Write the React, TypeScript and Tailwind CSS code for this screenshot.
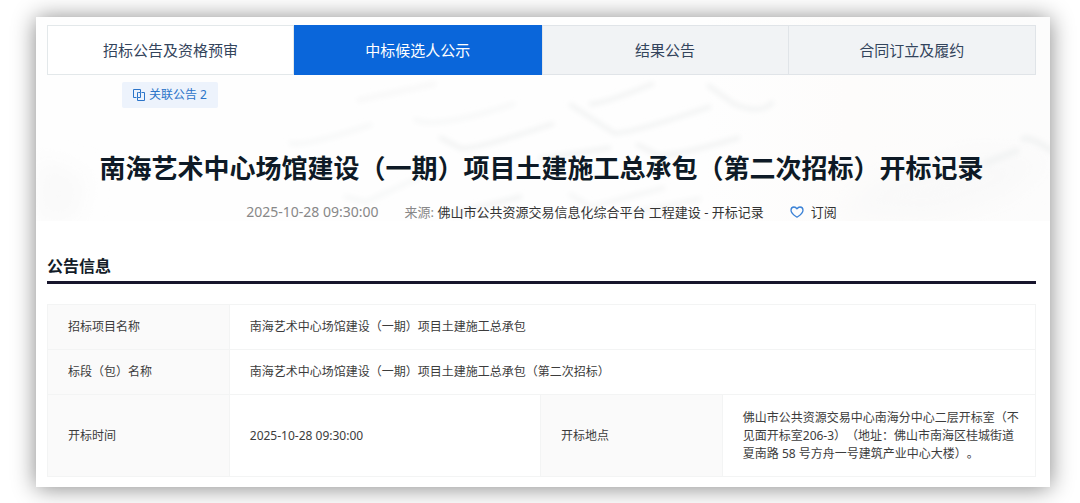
import React from "react";

type Tab = { label: string; active?: boolean; visited?: boolean };

const tabs: Tab[] = [
  { label: "招标公告及资格预审", visited: true },
  { label: "中标候选人公示", active: true },
  { label: "结果公告" },
  { label: "合同订立及履约" },
];

function tabClass(tab: Tab) {
  if (tab.active) return "border-[#0a66da] bg-[#0a66da] text-white";
  if (tab.visited) return "border-[#e3e8ea] bg-white/60 text-[#33445c]";
  return "border-[#e0e4e8] bg-[#f1f3f5] text-[#33445c]";
}

function HeroBackdrop() {
  return (
    <svg
      aria-hidden="true"
      className="absolute inset-x-0 top-0 h-[204px] w-full"
      viewBox="0 0 1014 204"
      preserveAspectRatio="xMidYMid slice"
      fill="none"
    >
      <defs>
        <filter id="soft" x="-10%" y="-10%" width="120%" height="120%">
          <feGaussianBlur stdDeviation="2.5" />
        </filter>
        <filter id="haze" x="-20%" y="-20%" width="140%" height="140%">
          <feGaussianBlur stdDeviation="12" />
        </filter>
        <linearGradient id="warm" x1="0" x2="1" y1="0" y2="0">
          <stop offset="0.66" stopColor="#fdfcfb" stopOpacity="0" />
          <stop offset="0.8" stopColor="#fdfcfb" />
          <stop offset="1" stopColor="#fcfcfc" />
        </linearGradient>
      </defs>
      <rect width="1014" height="204" fill="#fefefe" />
      <rect width="1014" height="204" fill="url(#warm)" />
      <g filter="url(#haze)" fill="#f9f9f9">
        <path d="M0 140 50 160 40 204 0 204Z" />
        <path d="M840 160 940 135 1014 140 970 180 900 204 800 200Z" />
      </g>
      <g filter="url(#soft)" stroke="#f3f4f4" strokeWidth="5" strokeLinecap="round" strokeLinejoin="round">
        <path d="M555 87Q570 86 616 67" />
        <path d="M535 88 578 116Q590 118 673 90" />
        <path d="M602 128 622 138Q636 140 702 121" />
        <path d="M380 103Q402 112 477 87" stroke="#f7f8f8" />
        <path d="M405 121 424 131Q436 134 516 107" />
        <path d="M255 126Q268 130 334 108" stroke="#f7f8f8" />
        <path d="M323 83 398 67" stroke="#f8f8f8" />
        <path d="M673 69 698 87Q724 98 736 86" />
        <path d="M505 142 573 131" />
        <path d="M420 196 484 180" />
        <path d="M535 178 555 190 627 171" stroke="#f6f7f7" />
        <path d="M595 196 663 182" stroke="#f6f7f7" />
        <path d="M310 180 330 185 384 160" stroke="#f7f8f8" />
        <path d="M988 122Q996 120 1014 133M950 146 980 134" strokeWidth="7" />
      </g>
    </svg>
  );
}

function LinkedIcon() {
  return (
    <svg aria-hidden="true" className="size-3" viewBox="0 0 12 12" fill="none" stroke="currentColor">
      <path d="M3.5 8.5h-3v-8h7v3M8.5 3.5h3v8h-7v-3" />
      <path d="M5.5 3.5h-1v5h3v-5z" />
    </svg>
  );
}

function HeartIcon() {
  return (
    <svg
      aria-hidden="true"
      className="h-3 w-3.5 text-[#3b82d6]"
      viewBox="0 0 14 12"
      fill="none"
      stroke="currentColor"
      strokeWidth="1.3"
      strokeLinejoin="round"
    >
      <path d="M7 11.2C5.6 10.2 1 7.6 1 4.2 1 2.3 2.4 1 4 1c1.300 0 2.300.7 3 1.800C7.700 1.700 8.700 1 10 1c1.600 0 3 1.300 3 3.200 0 3.400-4.600 6-6 7Z" />
    </svg>
  );
}

const labelCell = "border border-[#f3f4f4] bg-[#fafafa] px-5 text-left font-normal";
const valueCell = "border border-[#f3f4f4] pl-5 pr-3";

export default function App() {
  return (
    <div className="bg-white pt-[17px] pr-[30px] pb-4 pl-9 font-['Noto_Sans','Noto_Sans_CJK_SC',sans-serif] [text-spacing-trim:space-all]">
      <main className="relative bg-white px-[11px] pt-2 pb-[10px] shadow-[0_1px_22px_rgba(0,0,0,0.48)]">
        <HeroBackdrop />
        <div className="relative pr-[3px]">
          <nav className="grid grid-cols-4">
            {tabs.map((tab) => (
              <button
                key={tab.label}
                type="button"
                aria-current={tab.active ? "page" : undefined}
                className={`h-[50px] border last:border-l-0 text-[15px] leading-6 ${tabClass(tab)}`}
              >
                {tab.label}
              </button>
            ))}
          </nav>

          <button
            type="button"
            className="mt-[7px] ml-[75px] flex h-[26px] items-center gap-1 rounded-xs bg-[#edf3fc] px-[11px] text-xs text-[#2b74c9]"
          >
            <LinkedIcon />
            关联公告 2
          </button>

          <h1 className="mt-[42px] text-center text-[26px] leading-9 font-bold text-[#0e1a26]">
            南海艺术中心场馆建设（一期）项目土建施工总承包（第二次招标）开标记录
          </h1>

          <div className="mt-4 flex items-center justify-center gap-[26px] text-[13px] leading-5 text-[#333]">
            <time className="text-sm leading-5 text-[#888]">2025-10-28 09:30:00</time>
            <p>
              <span className="text-[#888]">来源:</span> 佛山市公共资源交易信息化综合平台 工程建设 - 开标记录
            </p>
            <button type="button" className="flex items-center gap-[7px]">
              <HeartIcon />
              订阅
            </button>
          </div>

          <h2 className="mt-8 border-b-[3px] border-[#17152c] pb-[3px] text-base leading-6 font-bold text-[#131c28]">
            公告信息
          </h2>

          <table className="mt-5 w-full table-fixed border-collapse text-xs leading-[18px] text-[#3c3c3c]">
            <colgroup>
              <col className="w-[18.4%]" />
              <col className="w-[31.5%]" />
              <col className="w-[18.4%]" />
              <col className="w-[31.7%]" />
            </colgroup>
            <tbody>
              <tr className="h-[45px]">
                <th scope="row" className={labelCell}>招标项目名称</th>
                <td colSpan={3} className={valueCell}>南海艺术中心场馆建设（一期）项目土建施工总承包</td>
              </tr>
              <tr className="h-[45px]">
                <th scope="row" className={labelCell}>标段（包）名称</th>
                <td colSpan={3} className={valueCell}>南海艺术中心场馆建设（一期）项目土建施工总承包（第二次招标）</td>
              </tr>
              <tr className="h-[82px]">
                <th scope="row" className={labelCell}>开标时间</th>
                <td className={valueCell}>2025-10-28 09:30:00</td>
                <th scope="row" className={labelCell}>开标地点</th>
                <td className={valueCell}>
                  佛山市公共资源交易中心南海分中心二层开标室（不见面开标室206-3）（地址：佛山市南海区桂城街道夏南路 58 号方舟一号建筑产业中心大楼）。
                </td>
              </tr>
            </tbody>
          </table>
        </div>
      </main>
    </div>
  );
}
